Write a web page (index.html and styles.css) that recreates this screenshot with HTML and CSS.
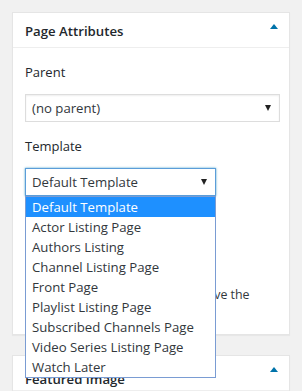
FILE: index.html
```html
<!DOCTYPE html>
<html lang="en">
<head>
  <meta charset="UTF-8">
  <meta name="viewport" content="width=device-width, initial-scale=1.0">
  <title>Page Attributes</title>
  <link rel="stylesheet" href="styles.css">
</head>
<body>

  <div class="postbox">
    <div class="postbox-header">
      <h2>Page Attributes</h2>
      <span class="toggle-arrow"></span>
    </div>
    <div class="inside">
      <p class="attr-label">Parent</p>
      <div class="fake-select wide">
        <span>(no parent)</span>
        <span class="select-arrow"></span>
      </div>

      <p class="attr-label">Template</p>
      <div class="select-wrap">
        <div class="fake-select narrow focused">
          <span>Default Template</span>
          <span class="select-arrow"></span>
        </div>
        <ul class="dropdown">
          <li class="selected">Default Template</li>
          <li>Actor Listing Page</li>
          <li>Authors Listing</li>
          <li>Channel Listing Page</li>
          <li>Front Page</li>
          <li>Playlist Listing Page</li>
          <li>Subscribed Channels Page</li>
          <li>Video Series Listing Page</li>
          <li>Watch Later</li>
        </ul>
      </div>

      <p class="attr-label">Order</p>
      <div class="order-input">0</div>

      <p class="help-text">Need help? Use the Help tab above the<br>screen title.</p>
    </div>
  </div>

  <div class="postbox featured">
    <div class="postbox-header">
      <h2>Featured Image</h2>
      <span class="toggle-arrow"></span>
    </div>
    <div class="inside">
      <p class="help-text">Set featured image</p>
    </div>
  </div>

</body>
</html>
```

FILE: styles.css
```css
body {
  margin: 0;
  padding: 12px 12px 0 12px;
  background-color: #f1f1f1;
  font-family: 'Open Sans', sans-serif;
  font-size: 13px;
  color: #23282d;
}
.postbox {
  background-color: #fff;
  border: 1px solid #e5e5e5;
  box-shadow: 0 1px 1px rgba(0, 0, 0, 0.04);
  margin-bottom: 20px;
}
.postbox-header {
  display: flex;
  align-items: flex-start;
  justify-content: space-between;
  box-sizing: border-box;
  height: 35px;
  padding: 0 12px;
  border-bottom: 1px solid #eee;
}
.postbox-header h2 {
  margin: 0;
  padding-top: 8px;
  line-height: 20px;
  font-size: 13.2px;
  font-weight: 600;
  color: #23282d;
}
.featured .postbox-header h2 {
  padding-top: 13px;
}
.toggle-arrow {
  width: 0;
  height: 0;
  border-left: 4px solid transparent;
  border-right: 4px solid transparent;
  border-bottom: 5px solid #0073aa;
  margin-top: 11px;
  margin-right: -1px;
}
.inside {
  padding: 0 12px 8px 12px;
}
.attr-label {
  margin: 14px 0 12px 0;
  line-height: 20px;
  font-size: 13px;
  color: #23282d;
}
.fake-select {
  box-sizing: border-box;
  height: 28px;
  display: flex;
  align-items: center;
  justify-content: space-between;
  padding: 0 8px 0 6px;
  border: 1px solid #ddd;
  box-shadow: inset 0 1px 2px rgba(0, 0, 0, 0.07);
  color: #32373c;
  font-size: 13.2px;
}
.fake-select.wide {
  width: 255px;
}
.fake-select.narrow {
  width: 191px;
}
.fake-select.focused {
  border-color: #5b9dd9;
  box-shadow: 0 0 2px rgba(30, 140, 190, 0.8);
}
.select-arrow {
  width: 0;
  height: 0;
  border-left: 3.5px solid transparent;
  border-right: 3.5px solid transparent;
  border-top: 6px solid #222;
}
.select-wrap {
  position: relative;
}
.dropdown {
  position: absolute;
  top: 28px;
  left: 0;
  z-index: 2;
  width: 191px;
  box-sizing: border-box;
  margin: 0;
  padding: 0;
  list-style: none;
  background-color: #fff;
  border: 1px solid #7a9cd3;
  font-size: 13.2px;
  color: #32373c;
}
.dropdown li {
  height: 20px;
  line-height: 20px;
  padding-left: 6px;
}
.dropdown li.selected {
  background-color: #1e90ff;
  color: #fff;
}
.order-input {
  box-sizing: border-box;
  width: 56px;
  height: 28px;
  padding: 0 6px;
  line-height: 26px;
  border: 1px solid #ddd;
}
.help-text {
  margin: 14px 0 0 0;
  line-height: 21px;
  font-size: 12.4px;
  color: #32373c;
}
```
